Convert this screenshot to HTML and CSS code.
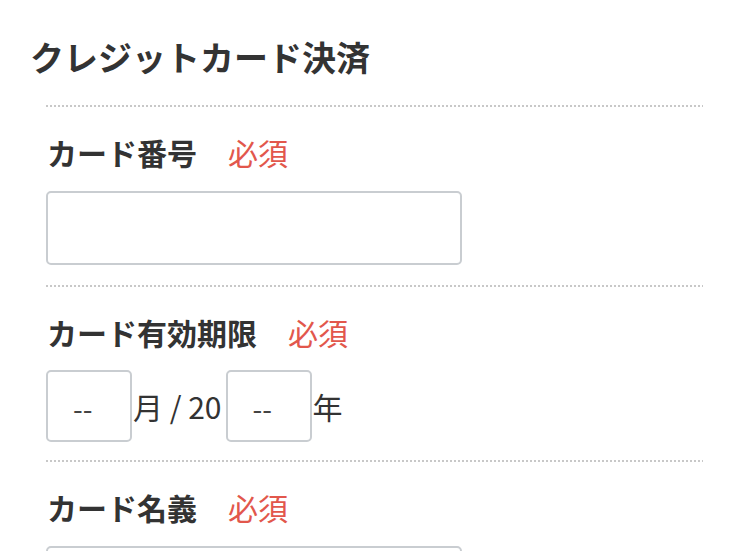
FILE: index.html
```html
<!DOCTYPE html>
<html lang="ja">
<head>
<meta charset="utf-8">
<link rel="stylesheet" href="styles.css">
</head>
<body>
<div class="page">
  <h1 class="title">クレジットカード決済</h1>
  <div class="form">
    <div class="field">
      <div class="label">カード番号<span class="req">必須</span></div>
      <div class="input wide"></div>
    </div>
    <div class="field">
      <div class="label">カード有効期限<span class="req">必須</span></div>
      <div class="date-row">
        <div class="input small">--</div>
        <span class="unit">月 / 20</span>
        <div class="input small">--</div>
        <span class="unit">年</span>
      </div>
    </div>
    <div class="field">
      <div class="label">カード名義<span class="req">必須</span></div>
      <div class="input wide"></div>
    </div>
  </div>
</div>
</body>
</html>
```

FILE: styles.css
```css
html, body {
  margin: 0;
  padding: 0;
  background: #fff;
}
body {
  font-family: "Noto Sans CJK JP", "Noto Sans", sans-serif;
  color: #333;
  overflow: hidden;
}
.page {
  padding: 37px 47px 0 46px;
}
.title {
  margin: 0 0 28px -16px;
  font-size: 34px;
  line-height: 40px;
  font-weight: 700;
  color: #333;
}
.field {
  padding: 27px 0 20px 0;
  background-image: linear-gradient(to right, #c8c8c8 50%, transparent 50%);
  background-size: 4px 2px;
  background-repeat: repeat-x;
  background-position: 0 0;
}
.label {
  font-size: 30px;
  line-height: 40px;
  font-weight: 700;
  color: #333;
  margin-left: 1px;
  margin-bottom: 19px;
}
.req {
  margin-left: 31px;
  font-weight: 400;
  color: #e2574c;
}
.input {
  box-sizing: border-box;
  border: 2px solid #c9cdd1;
  border-radius: 5px;
  background: #fff;
}
.wide {
  width: 416px;
  height: 74px;
}
.date-row {
  display: flex;
  align-items: center;
  margin-top: -1px;
  margin-bottom: -2px;
}
.small {
  width: 86px;
  height: 72px;
  display: flex;
  align-items: center;
  padding-left: 25px;
  padding-top: 4px;
  font-size: 28px;
  color: #444;
}
.unit {
  font-size: 30px;
  color: #333;
  padding: 0 4px 0 1px;
}
```
